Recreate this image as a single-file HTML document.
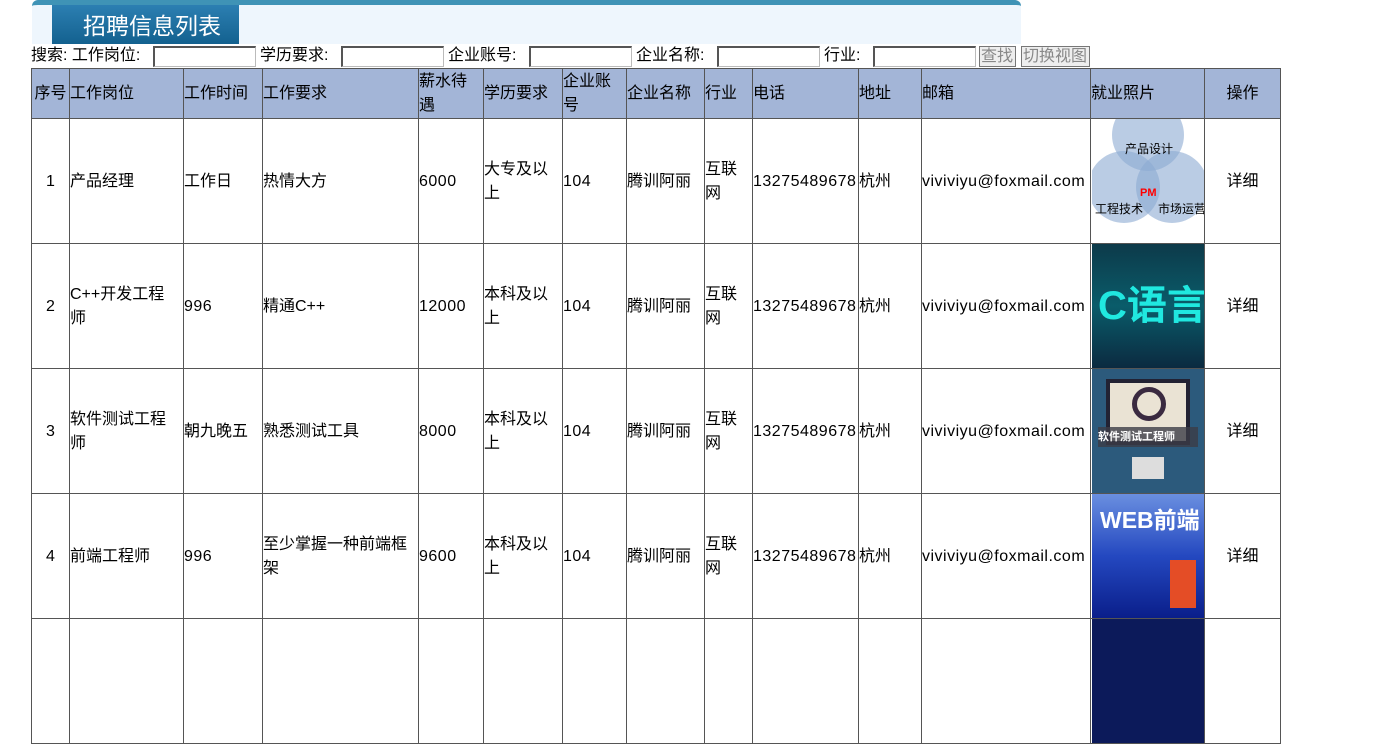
<!DOCTYPE html>
<html><head><meta charset="utf-8"><style>
*{box-sizing:border-box}
body{margin:0;width:1373px;height:649px;overflow:hidden;background:#fff;font-family:"Liberation Sans","Noto Sans CJK SC",sans-serif;font-size:16px;color:#000;position:relative}
.hd{position:absolute;left:32px;top:0;width:989px;height:44px;background:#eef6fd;border-radius:6px 6px 0 0;border-top:5px solid #3f93b6;}
.tt{position:absolute;left:52px;top:5px;width:187px;height:39px;background:linear-gradient(#2c7fb2,#13618f);color:#fff;font-size:23px;line-height:42px;padding-left:31px}
.sr{position:absolute;left:31px;top:45px;height:22px;line-height:22px;white-space:nowrap}
.in{position:absolute;top:46px;height:21px;width:103px;border:1px solid #000;border-width:2px 1px 1px 2px;border-color:#555 #bbb #bbb #555;background:#fff}
.bt{position:absolute;top:46px;height:21px;border:1px solid #777;background:#eee;color:#888;font-size:16px;line-height:19px;padding:0 1px}
table{position:absolute;left:31px;top:68px;border-collapse:collapse;table-layout:fixed;width:1250px}
td,th{border:1px solid #555;padding:0;font-weight:normal;text-align:left;vertical-align:middle;line-height:24px;overflow:hidden;word-break:break-all}
.l{letter-spacing:0.5px}
th{background:#a3b5d7;height:50px}
td{height:125px;padding-top:2px}
.c{text-align:center}
.im{width:112px;height:124px;margin-left:1px;margin-top:-2px;position:relative;overflow:hidden;letter-spacing:0;white-space:nowrap}
</style></head><body>
<div class="hd"></div>
<div class="tt">招聘信息列表</div>
<div class="sr">搜索: 工作岗位:</div>
<div class="in" style="left:153px"></div>
<div class="sr" style="left:260px">学历要求:</div>
<div class="in" style="left:341px"></div>
<div class="sr" style="left:448px">企业账号:</div>
<div class="in" style="left:529px"></div>
<div class="sr" style="left:636px">企业名称:</div>
<div class="in" style="left:717px"></div>
<div class="sr" style="left:824px">行业:</div>
<div class="in" style="left:873px"></div>
<div class="bt" style="left:979px;width:37px">查找</div>
<div class="bt" style="left:1021px;width:69px">切换视图</div>
<table>
<colgroup><col style="width:38px"><col style="width:114px"><col style="width:79px"><col style="width:156px"><col style="width:65px"><col style="width:79px"><col style="width:64px"><col style="width:78px"><col style="width:48px"><col style="width:106px"><col style="width:63px"><col style="width:169px"><col style="width:114px"><col style="width:76px"></colgroup>
<tr><th class="c">序号</th><th>工作岗位</th><th>工作时间</th><th>工作要求</th><th>薪水待<br>遇</th><th>学历要求</th><th>企业账<br>号</th><th>企业名称</th><th>行业</th><th>电话</th><th>地址</th><th>邮箱</th><th>就业照片</th><th class="c">操作</th></tr>
<tr><td class="c">1</td><td>产品经理</td><td>工作日</td><td>热情大方</td><td class="l">6000</td><td>大专及以<br>上</td><td class="l">104</td><td>腾训阿丽</td><td>互联<br>网</td><td class="l">13275489678</td><td>杭州</td><td class="l">viviviyu@foxmail.com</td><td><div class="im" style="background:#fff"><div style="position:absolute;left:20px;top:-20px;width:72px;height:72px;border-radius:50%;background:rgba(140,170,210,.6)"></div><div style="position:absolute;left:-4px;top:32px;width:72px;height:72px;border-radius:50%;background:rgba(140,170,210,.6)"></div><div style="position:absolute;left:44px;top:32px;width:72px;height:72px;border-radius:50%;background:rgba(140,170,210,.6)"></div><div style="position:absolute;left:33px;top:18px;font-size:12px">产品设计</div><div style="position:absolute;left:3px;top:78px;font-size:12px">工程技术</div><div style="position:absolute;left:66px;top:78px;font-size:12px">市场运营</div><div style="position:absolute;left:48px;top:62px;font-size:11px;color:red;font-weight:bold">PM</div></div></td><td class="c">详细</td></tr>
<tr><td class="c">2</td><td>C++开发工程<br>师</td><td class="l">996</td><td>精通C++</td><td class="l">12000</td><td>本科及以<br>上</td><td class="l">104</td><td>腾训阿丽</td><td>互联<br>网</td><td class="l">13275489678</td><td>杭州</td><td class="l">viviviyu@foxmail.com</td><td><div class="im" style="background:linear-gradient(#0d3a4a,#0a5c6a 50%,#0b2a40)"><div style="position:absolute;left:6px;top:38px;font-size:40px;font-weight:bold;color:#20e8e0;line-height:48px">C语言</div></div></td><td class="c">详细</td></tr>
<tr><td class="c">3</td><td>软件测试工程<br>师</td><td>朝九晚五</td><td>熟悉测试工具</td><td class="l">8000</td><td>本科及以<br>上</td><td class="l">104</td><td>腾训阿丽</td><td>互联<br>网</td><td class="l">13275489678</td><td>杭州</td><td class="l">viviviyu@foxmail.com</td><td><div class="im" style="background:#2c5a7c"><div style="position:absolute;left:14px;top:10px;width:84px;height:66px;background:#eae3d4;border:4px solid #223"></div><div style="position:absolute;left:40px;top:18px;width:34px;height:34px;border-radius:50%;border:5px solid #3a2a40"></div><div style="position:absolute;left:6px;top:58px;width:100px;height:20px;background:rgba(60,60,70,.8);color:#fff;font-size:11px;font-weight:bold;line-height:20px">软件测试工程师</div><div style="position:absolute;left:40px;top:88px;width:32px;height:22px;background:#ddd"></div></div></td><td class="c">详细</td></tr>
<tr><td class="c">4</td><td>前端工程师</td><td class="l">996</td><td>至少掌握一种前端框<br>架</td><td class="l">9600</td><td>本科及以<br>上</td><td class="l">104</td><td>腾训阿丽</td><td>互联<br>网</td><td class="l">13275489678</td><td>杭州</td><td class="l">viviviyu@foxmail.com</td><td><div class="im" style="background:linear-gradient(#6a8fe0,#2448c0 50%,#0a1e8a)"><div style="position:absolute;left:8px;top:14px;font-size:23px;font-weight:bold;color:#fff">WEB前端</div><div style="position:absolute;left:78px;top:66px;width:26px;height:48px;background:#e44d26"></div></div></td><td class="c">详细</td></tr>
<tr><td></td><td></td><td></td><td></td><td></td><td></td><td></td><td></td><td></td><td></td><td></td><td></td><td><div class="im" style="background:#0c1a5a"></div></td><td></td></tr>
</table>
</body></html>
